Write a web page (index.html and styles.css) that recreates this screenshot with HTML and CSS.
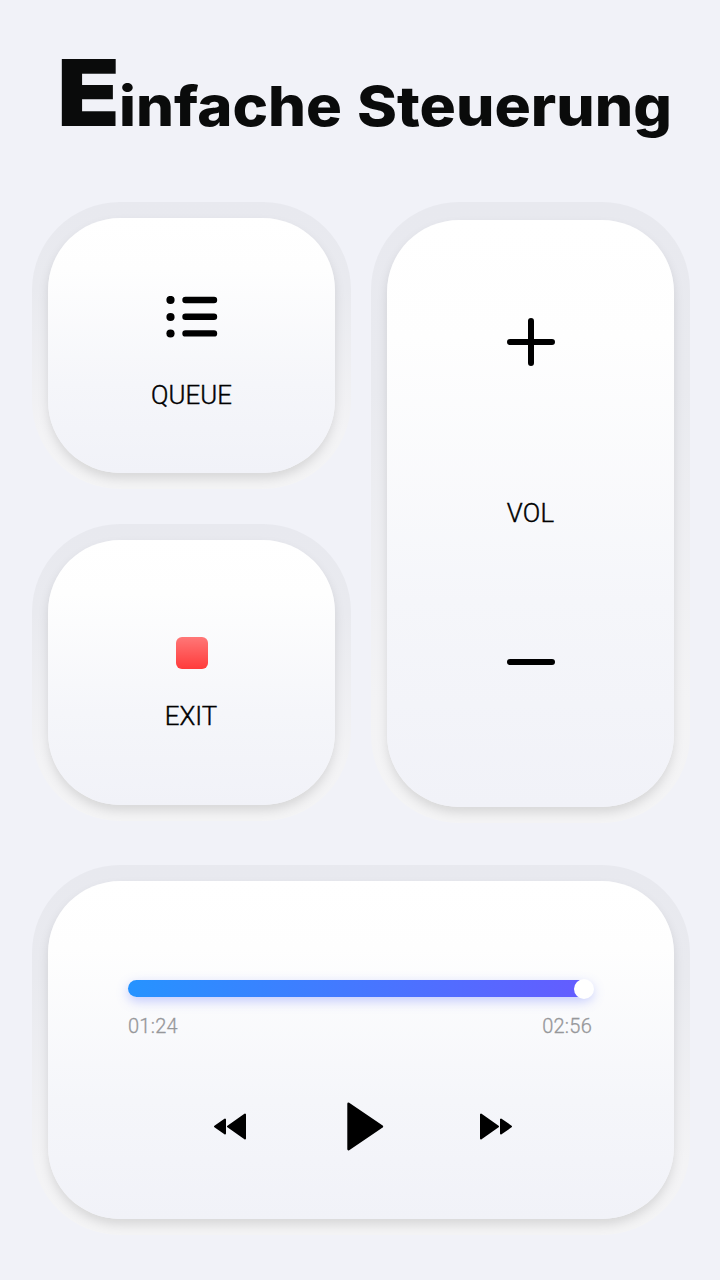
FILE: index.html
```html
<!DOCTYPE html>
<html lang="de">
<head>
<meta charset="utf-8">
<title>Einfache Steuerung</title>
<link rel="stylesheet" href="styles.css">
</head>
<body>
<main class="screen">
  <h1 class="title">
    <svg width="720" height="160" viewBox="0 0 720 160">
      <text class="initial" x="57" y="126" textLength="63" lengthAdjust="spacingAndGlyphs">E</text>
      <text class="word" x="119" y="126" textLength="223" lengthAdjust="spacingAndGlyphs">infache</text>
      <text class="word" x="357" y="126" textLength="315" lengthAdjust="spacingAndGlyphs">Steuerung</text>
    </svg>
  </h1>
  <div class="controls">
    <div class="stack">
      <section class="frame queue">
        <button class="card">
          <svg class="list-icon" width="52" height="42" viewBox="0 0 52 42">
            <circle cx="4.5" cy="4" r="4.1"/><circle cx="4.5" cy="21" r="4.1"/><circle cx="4.5" cy="37.5" r="4.1"/>
            <path d="M19.5 4H48M19.5 20.7H48M19.5 37.4H48" stroke="#000" stroke-width="6.4" stroke-linecap="round"/>
          </svg>
          <span class="label">QUEUE</span>
        </button>
      </section>
      <section class="frame exit">
        <button class="card">
          <span class="stop"></span>
          <span class="label">EXIT</span>
        </button>
      </section>
    </div>
    <section class="frame volume">
      <div class="card">
        <svg width="48" height="48" viewBox="0 0 48 48"><path d="M3 24H45M24 3V45" stroke="#000" stroke-width="6" stroke-linecap="round"/></svg>
        <span class="label">VOL</span>
        <svg width="48" height="6" viewBox="0 0 48 6"><path d="M3 3H45" stroke="#000" stroke-width="6" stroke-linecap="round"/></svg>
      </div>
    </section>
  </div>
  <section class="frame player">
    <div class="card">
      <div class="track"><span class="knob"></span></div>
      <div class="times"><span>01:24</span><span>02:56</span></div>
      <div class="transport">
        <svg width="32" height="28" viewBox="0 0 32 28"><path d="M1 13.5L11 6.5V20.5ZM14 13.5L31 1.5V25.5Z" stroke="#000" stroke-width="2" stroke-linejoin="round"/></svg>
        <svg class="play" width="37" height="49" viewBox="0 0 37 49"><path d="M1.5 1.8L35 24.5L1.5 47.2Z" stroke="#000" stroke-width="2.4" stroke-linejoin="round"/></svg>
        <svg width="32" height="28" viewBox="0 0 32 28"><path d="M31 13.5L21 6.5V20.5ZM18 13.5L1 1.5V25.5Z" stroke="#000" stroke-width="2" stroke-linejoin="round"/></svg>
      </div>
    </div>
  </section>
</main>
</body>
</html>
```
FILE: styles.css
```css
* { box-sizing: border-box; }
body { margin: 0; background: #f1f2f8; font-family: Roboto, "Liberation Sans", sans-serif; color: #000; }
.screen { width: 720px; height: 1280px; overflow: hidden; }
.title { margin: 0; height: 202px; }
.title svg { display: block; }
.title text { font-family: Inter, "Open Sans", sans-serif; fill: #0a0b0b; }
.initial { font-size: 92px; font-weight: 900; }
.word { font-size: 55.5px; font-weight: 850; }
.controls { display: flex; gap: 20px; padding: 0 30px 0 32px; }
.stack { display: flex; flex-direction: column; gap: 35px; }
.frame { padding: 16px; border-radius: 88px; overflow: hidden; background: linear-gradient(#e8e9ef 0%, #e9eaef 30%, #f3f3f5 80%, #f4f4f5 100%); }
.card {
  display: flex; flex-direction: column; align-items: center;
  width: 100%; height: 100%; padding: 0; border: 0; border-radius: 72px;
  background: linear-gradient(#fff 0%, #fefefe 20%, #f5f6fa 65%, #f1f2f8 100%);
  box-shadow: 0 6px 12px -1px rgba(0, 0, 0, .13);
  color: #000; font-family: inherit;
}
.label { font-size: 25.8px; line-height: 32px; font-weight: 300; -webkit-text-stroke: .4px #000; }
.queue { width: 319px; height: 287px; }
.queue .card { padding-top: 78px; }
.list-icon { margin-bottom: 41px; }
.exit { width: 319px; height: 297px; }
.exit .card { padding-top: 97px; }
.stop { width: 32px; height: 32px; margin: 0 0 31px 1px; border-radius: 6px; background: linear-gradient(#ff7777, #ff3b3b); }
.exit .label { margin-right: 1px; }
.volume { width: 319px; height: 621px; padding: 18px 16px 16px; }
.volume .card { padding-top: 98px; }
.volume .label { margin: 131px 0 130px; letter-spacing: .3px; }
.player { width: 658px; height: 370px; margin: 42px 0 0 32px; }
.player .card { align-items: stretch; padding: 99px 80px 0; }
.track { display: flex; align-items: center; justify-content: flex-end; height: 17px; width: 465px; border-radius: 9px; background: linear-gradient(90deg, #2693ff, #655bff); box-shadow: 0 4px 12px rgba(90, 110, 255, .35); }
.knob { width: 20px; height: 20px; margin-right: -1px; border-radius: 50%; background: #fff; flex: none; }
.times { display: flex; justify-content: space-between; margin-top: 17px; width: 464px; font-size: 20px; line-height: 24px; font-weight: 300; -webkit-text-stroke: .3px #96979a; color: #96979a; letter-spacing: .25px; }
.transport { display: flex; align-items: center; justify-content: space-between; width: 298px; margin: 64px 0 0 86px; }
.play { margin: 0 -2px 0 2px; }
```
